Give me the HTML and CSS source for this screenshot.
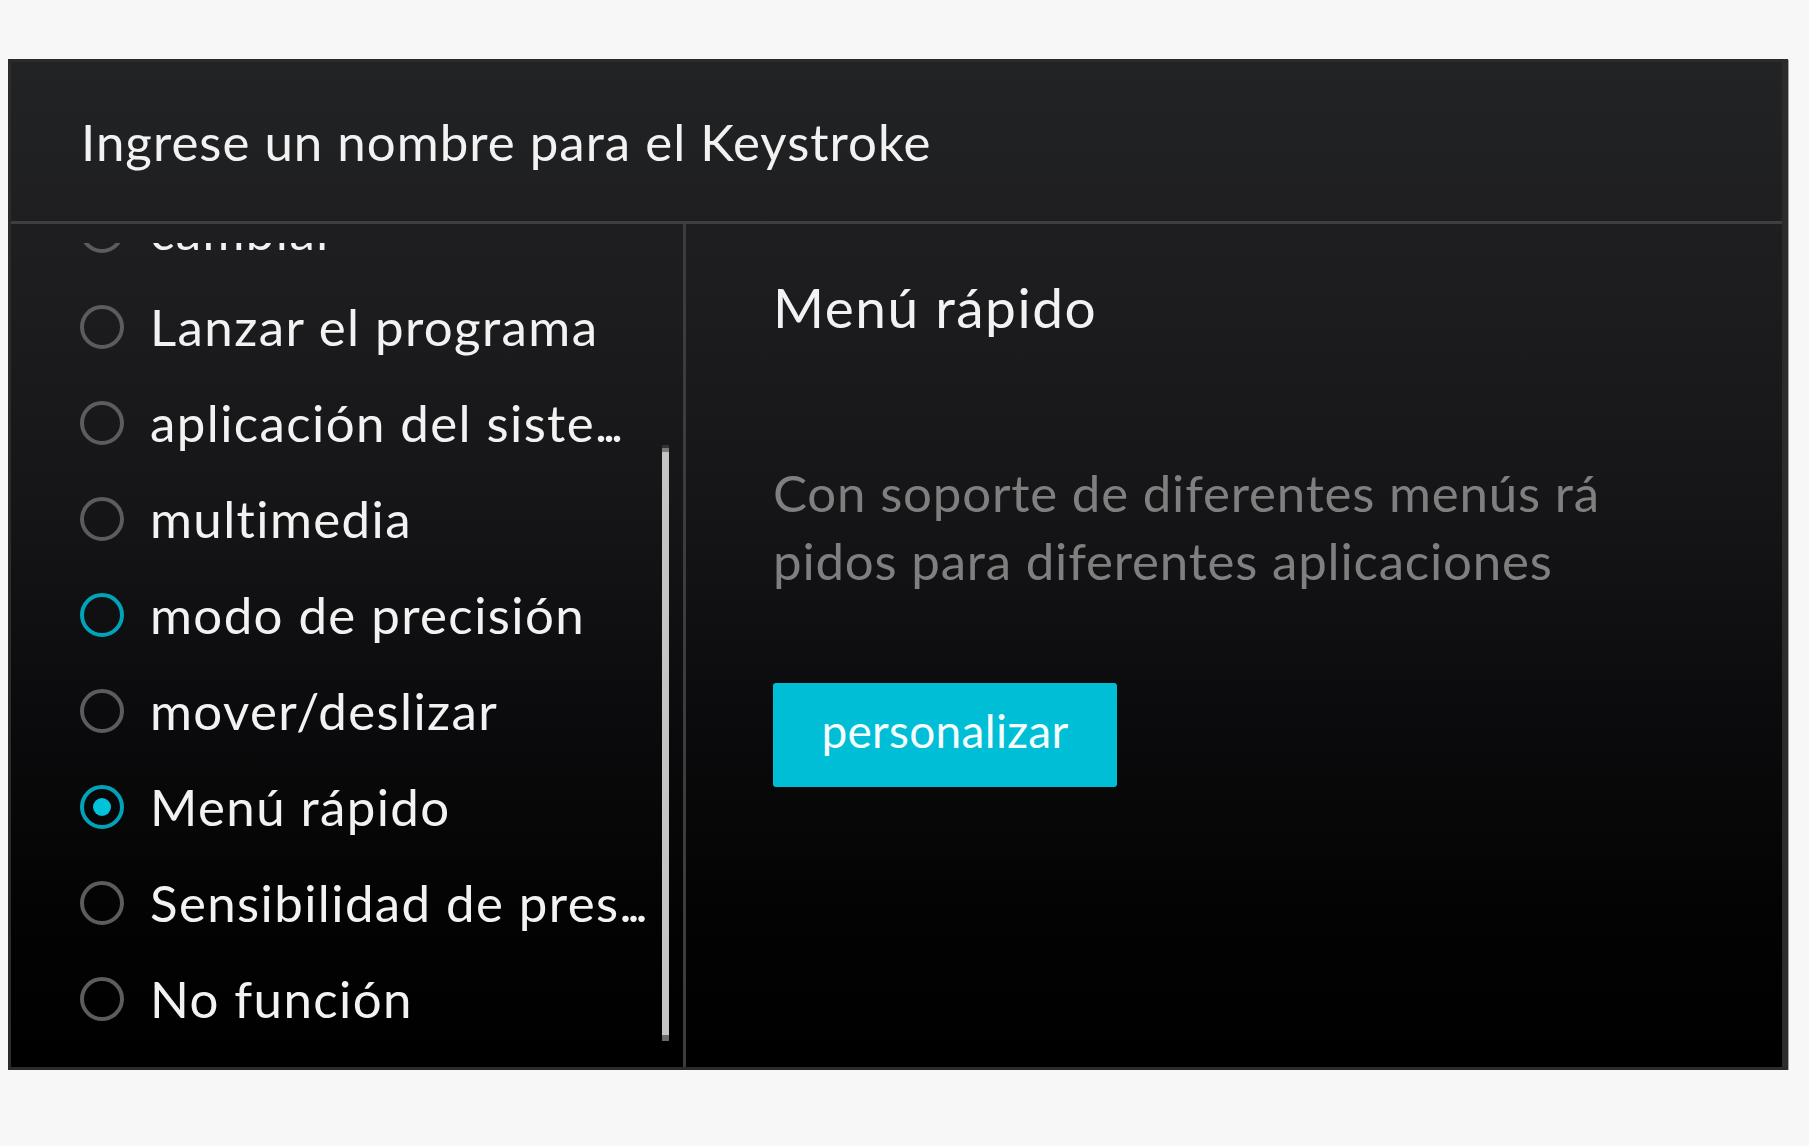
FILE: index.html
```html
<!DOCTYPE html>
<html lang="es">
<head>
<meta charset="utf-8">
<title>Keystroke</title>
<link rel="stylesheet" href="styles.css">
</head>
<body>
<div class="window">
  <div class="header">Ingrese un nombre para el Keystroke</div>
  <div class="body">
    <div class="left">
      <div class="viewport">
        <ul class="list">
          <li class="row"><span class="radio"></span><span class="label">cambiar</span></li>
          <li class="row"><span class="radio"></span><span class="label">Lanzar el programa</span></li>
          <li class="row"><span class="radio"></span><span class="label">aplicación del siste<span class="dots">...</span></span></li>
          <li class="row"><span class="radio"></span><span class="label">multimedia</span></li>
          <li class="row"><span class="radio hover"></span><span class="label">modo de precisión</span></li>
          <li class="row"><span class="radio"></span><span class="label">mover/deslizar</span></li>
          <li class="row"><span class="radio checked"></span><span class="label">Menú rápido</span></li>
          <li class="row"><span class="radio"></span><span class="label">Sensibilidad de pres<span class="dots">...</span></span></li>
          <li class="row"><span class="radio"></span><span class="label">No función</span></li>
        </ul>
      </div>
      <div class="scrollbar"></div>
    </div>
    <div class="right">
      <div class="title">Menú rápido</div>
      <p class="desc">Con soporte de diferentes menús rá<br>pidos para diferentes aplicaciones</p>
      <button class="btn">personalizar</button>
    </div>
  </div>
</div>
</body>
</html>
```
FILE: styles.css
```css
html, body {
  margin: 0;
  padding: 0;
}
body {
  background: #f7f7f7;
  font-family: Lato, "Noto Sans", sans-serif;
}
.window {
  box-sizing: border-box;
  margin: 59px 0 0 8px;
  width: 1780px;
  height: 1011px;
  border-style: solid;
  border-color: #2b2b2b;
  border-width: 3px 6px 3px 3px;
  box-shadow: 1px 1px 0 #a4a4a4;
  background: linear-gradient(to bottom, #222325 0%, #1c1c1e 25%, #151517 45%, #0b0b0d 65%, #030303 85%, #000 100%);
  display: flex;
  flex-direction: column;
}
.header {
  height: 159px;
  flex: none;
  display: flex;
  align-items: center;
  padding-left: 70px;
  font-size: 51px;
  line-height: 1.2;
  letter-spacing: 1px;
  color: #f2f2f2;
  border-bottom: 3px solid #3e3e40;
}
.body {
  flex: 1;
  display: flex;
  min-height: 0;
}
.left {
  position: relative;
  width: 672px;
  flex: none;
  border-right: 3px solid #3c3c3e;
  padding-top: 19px;
}
.viewport {
  height: 805px;
  overflow: hidden;
}
.list {
  list-style: none;
  margin: -60px 0 0 0;
  padding: 0 0 0 69px;
}
.row {
  height: 96px;
  display: flex;
  align-items: center;
  gap: 26px;
}
.radio {
  box-sizing: border-box;
  width: 44px;
  height: 44px;
  border-radius: 50%;
  border: 4px solid #5c5c5c;
  flex: none;
  display: flex;
  align-items: center;
  justify-content: center;
}
.radio.hover {
  border-color: #00a3b8;
}
.radio.checked {
  border-color: #00a3b8;
}
.radio.checked::after {
  content: "";
  width: 18px;
  height: 18px;
  border-radius: 50%;
  background: #00c2da;
}
.label {
  font-size: 51px;
  line-height: 1.2;
  letter-spacing: 1.4px;
  color: #f2f2f2;
  white-space: nowrap;
}
.dots {
  letter-spacing: -4px;
}
.scrollbar {
  position: absolute;
  top: 221px;
  right: 14px;
  width: 7px;
  height: 596px;
  background: linear-gradient(to bottom, #333 0, #333 3px, #7a7a7a 3px, #7a7a7a 7px, #c4c4c4 7px, #c4c4c4 calc(100% - 6px), #6a6a6a calc(100% - 6px));
}
.right {
  flex: 1;
  padding: 50px 0 0 87px;
}
.title {
  font-size: 55px;
  line-height: 66px;
  letter-spacing: 1.5px;
  color: #f2f2f2;
}
.desc {
  margin: 119px 0 0 0;
  font-size: 51px;
  line-height: 68px;
  letter-spacing: 0.8px;
  color: #7f7f7f;
}
.btn {
  margin-top: 88px;
  width: 344px;
  height: 104px;
  border: none;
  border-radius: 3px;
  background: #00bed6;
  color: #f4fdff;
  font-family: Lato, "Noto Sans", sans-serif;
  font-size: 46px;
  letter-spacing: 0.3px;
  padding: 0 0 9px 0;
  display: flex;
  align-items: center;
  justify-content: center;
}
```
